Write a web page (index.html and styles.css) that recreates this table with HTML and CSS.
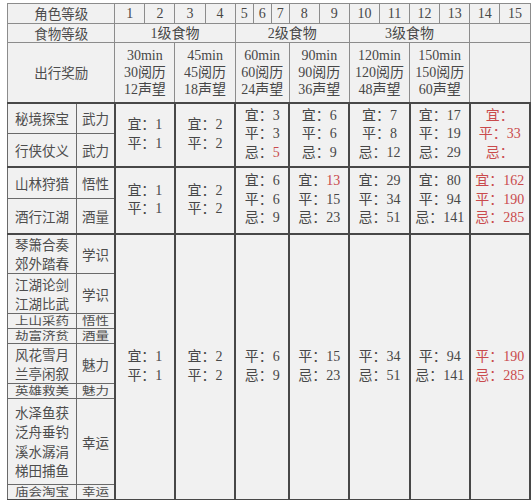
FILE: index.html
```html
<!DOCTYPE html>
<html lang="zh-CN">
<head>
<meta charset="utf-8">
<title>出行奖励</title>
<link rel="stylesheet" href="styles.css">
</head>
<body>
<table class="t">
  <colgroup>
    <col class="c-act"><col class="c-attr">
    <col class="c-lv"><col class="c-lv"><col class="c-lv"><col class="c-lv">
    <col class="c-sm"><col class="c-sm"><col class="c-sm">
    <col class="c-lv"><col class="c-lv"><col class="c-lv"><col class="c-lv">
    <col class="c-lv"><col class="c-lv"><col class="c-lv"><col class="c-lv">
  </colgroup>
  <tr class="h-lv hd">
    <td colspan="2" class="cjk">角色等级</td>
    <td>1</td><td>2</td><td>3</td><td>4</td><td>5</td><td>6</td><td>7</td><td>8</td><td>9</td><td>10</td><td>11</td><td>12</td><td>13</td><td>14</td><td>15</td>
  </tr>
  <tr class="h-food hd">
    <td colspan="2" class="cjk">食物等级</td>
    <td colspan="4">1级食物</td>
    <td colspan="5">2级食物</td>
    <td colspan="4">3级食物</td>
    <td colspan="2"></td>
  </tr>
  <tr class="h-reward hd rw">
    <td colspan="2" class="cjk">出行奖励</td>
    <td colspan="2">30min<br>30阅历<br>12声望</td>
    <td colspan="2">45min<br>45阅历<br>18声望</td>
    <td colspan="3">60min<br>60阅历<br>24声望</td>
    <td colspan="2">90min<br>90阅历<br>36声望</td>
    <td colspan="2">120min<br>120阅历<br>48声望</td>
    <td colspan="2">150min<br>150阅历<br>60声望</td>
    <td colspan="2"></td>
  </tr>

  <tr class="h-a1 top">
    <td class="n cjk">秘境探宝</td><td class="a cjk">武力</td>
    <td colspan="2" rowspan="2" class="d">宜：1<br>平：1</td>
    <td colspan="2" rowspan="2" class="d">宜：2<br>平：2</td>
    <td colspan="3" rowspan="2" class="d">宜：3<br>平：3<br>忌：<span class="r">5</span></td>
    <td colspan="2" rowspan="2" class="d">宜：6<br>平：6<br>忌：9</td>
    <td colspan="2" rowspan="2" class="d">宜：7<br>平：8<br>忌：12</td>
    <td colspan="2" rowspan="2" class="d">宜：17<br>平：19<br>忌：29</td>
    <td colspan="2" rowspan="2" class="d r">宜：<br>平：33<br>忌：</td>
  </tr>
  <tr class="h-a2">
    <td class="n cjk">行侠仗义</td><td class="a cjk">武力</td>
  </tr>

  <tr class="h-b1 top">
    <td class="n cjk">山林狩猎</td><td class="a cjk">悟性</td>
    <td colspan="2" rowspan="2" class="d">宜：1<br>平：1</td>
    <td colspan="2" rowspan="2" class="d">宜：2<br>平：2</td>
    <td colspan="3" rowspan="2" class="d">宜：6<br>平：6<br>忌：9</td>
    <td colspan="2" rowspan="2" class="d">宜：<span class="r">13</span><br>平：15<br>忌：23</td>
    <td colspan="2" rowspan="2" class="d">宜：29<br>平：34<br>忌：51</td>
    <td colspan="2" rowspan="2" class="d">宜：80<br>平：94<br>忌：141</td>
    <td colspan="2" rowspan="2" class="d r">宜：162<br>平：190<br>忌：285</td>
  </tr>
  <tr class="h-b2">
    <td class="n cjk">酒行江湖</td><td class="a cjk">酒量</td>
  </tr>

  <tr class="h-c2l top">
    <td class="n cjk ml">琴箫合奏<br>郊外踏春</td><td class="a cjk">学识</td>
    <td colspan="2" rowspan="8" class="d">宜：1<br>平：1</td>
    <td colspan="2" rowspan="8" class="d">宜：2<br>平：2</td>
    <td colspan="3" rowspan="8" class="d">平：6<br>忌：9</td>
    <td colspan="2" rowspan="8" class="d">平：15<br>忌：23</td>
    <td colspan="2" rowspan="8" class="d">平：34<br>忌：51</td>
    <td colspan="2" rowspan="8" class="d">平：94<br>忌：141</td>
    <td colspan="2" rowspan="8" class="d r">平：190<br>忌：285</td>
  </tr>
  <tr class="h-c2l">
    <td class="n cjk ml">江湖论剑<br>江湖比武</td><td class="a cjk">学识</td>
  </tr>
  <tr class="h-c1l">
    <td class="n cjk sl"><span class="sq">上山采药</span></td><td class="a cjk sl"><span class="sq">悟性</span></td>
  </tr>
  <tr class="h-c1l">
    <td class="n cjk sl"><span class="sq">劫富济贫</span></td><td class="a cjk sl"><span class="sq">酒量</span></td>
  </tr>
  <tr class="h-c2l">
    <td class="n cjk ml">风花雪月<br>兰亭闲叙</td><td class="a cjk">魅力</td>
  </tr>
  <tr class="h-c1l">
    <td class="n cjk sl"><span class="sq">英雄救美</span></td><td class="a cjk sl"><span class="sq">魅力</span></td>
  </tr>
  <tr class="h-c4l">
    <td class="n cjk ml4">水泽鱼获<br>泛舟垂钓<br>溪水潺涓<br>梯田捕鱼</td><td class="a cjk">幸运</td>
  </tr>
  <tr class="h-c1l last">
    <td class="n cjk sl"><span class="sq">庙会淘宝</span></td><td class="a cjk sl"><span class="sq">幸运</span></td>
  </tr>
</table>
</body>
</html>
```

FILE: styles.css
```css
body {
  margin: 0;
  background: #ffffff;
}

.t {
  border-collapse: collapse;
  table-layout: fixed;
  width: 524px;
  margin: 3px 0 0 7px;
  font-family: "Liberation Serif", "Noto Sans CJK SC", serif;
  font-size: 14px;
  color: #474747;
  background: #f1f1f1;
}

.c-act { width: 69px; }
.c-attr { width: 38px; }
.c-lv { width: 30px; }
.c-sm { width: 18px; }

.t td {
  border: 1px solid #6a6a6a;
  text-align: center;
  vertical-align: middle;
  padding: 0;
  line-height: 18px;
  white-space: nowrap;
  overflow: hidden;
}

.t td.cjk {
  font-family: "Noto Sans CJK SC", sans-serif;
  font-size: 13.5px;
  color: #4d4d4d;
}

.hd td {
  border-color: #8c8c8c;
  line-height: 17px;
}

.h-lv { height: 20px; }
.h-food { height: 19px; }
.h-reward { height: 60px; }
.h-a1 { height: 31px; }
.h-a2 { height: 33px; }
.h-b1 { height: 32px; }
.h-b2 { height: 35px; }
.h-c2l { height: 40px; }
.h-c1l { height: 14px; }
.h-c4l { height: 86px; }

.top td {
  border-top: 2px solid #484848;
}

.last td {
  border-bottom: 2px solid #484848;
}

.t td.d {
  border-left: 2px solid #484848;
  border-right: 2px solid #484848;
  border-bottom: 2px solid #484848;
  line-height: 18.5px;
}

.t td.a {
  border-right: 2px solid #484848;
}

.t td.ml {
  line-height: 19px;
}

.t td.ml4 {
  line-height: 19.5px;
}

.t td.sl {
  line-height: 11px;
  height: 14px;
}

.sq {
  display: inline-block;
  line-height: 13px;
  height: 11px;
  transform: scaleY(0.8);
  transform-origin: 50% 40%;
}

.r {
  color: #c94a4c;
}
```
